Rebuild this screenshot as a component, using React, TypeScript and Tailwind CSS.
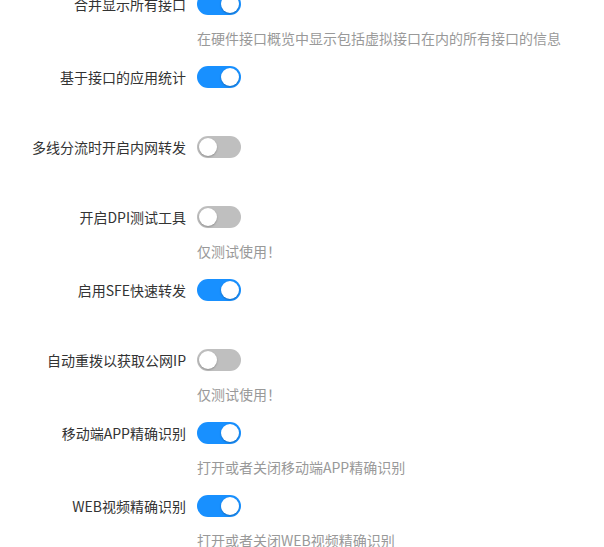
import React from "react";

type Row = { label: string; on: boolean; desc?: string };

const rows: Row[] = [
  { label: "合并显示所有接口", on: true, desc: "在硬件接口概览中显示包括虚拟接口在内的所有接口的信息" },
  { label: "基于接口的应用统计", on: true },
  { label: "多线分流时开启内网转发", on: false },
  { label: "开启DPI测试工具", on: false, desc: "仅测试使用！" },
  { label: "启用SFE快速转发", on: true },
  { label: "自动重拨以获取公网IP", on: false, desc: "仅测试使用！" },
  { label: "移动端APP精确识别", on: true, desc: "打开或者关闭移动端APP精确识别" },
  { label: "WEB视频精确识别", on: true, desc: "打开或者关闭WEB视频精确识别" },
];

function Switch({ on }: { on: boolean }) {
  return on ? (
    <div className="relative h-[22px] w-[44px] rounded-full bg-[#1890ff]">
      <div className="absolute right-[2px] top-[2px] h-[18px] w-[18px] rounded-full bg-white shadow-[0_1px_2px_rgba(0,0,0,0.25)]" />
    </div>
  ) : (
    <div className="relative h-[22px] w-[44px] rounded-full bg-[#bfbfbf]">
      <div className="absolute left-[2px] top-[2px] h-[18px] w-[18px] rounded-full bg-white shadow-[0_1px_2px_rgba(0,0,0,0.25)]" />
    </div>
  );
}

export default function App() {
  return (
    <div
      className="h-[547px] w-[604px] overflow-hidden bg-white"
      style={{ fontFamily: '"Noto Sans CJK SC", "Noto Sans", sans-serif' }}
    >
      <div className="mt-[-12px] flex flex-col">
        {rows.map((r) => (
          <div key={r.label} className={r.desc ? "h-[73px]" : "h-[70px]"}>
            <div className="flex h-[32px] items-center">
              <div className="w-[197px] pr-[11px] text-right text-[14px] leading-[32px] text-[#333333]">
                {r.label}
              </div>
              <Switch on={r.on} />
            </div>
            {r.desc && (
              <div className="mt-[8px] pl-[197px] text-[14px] leading-[20px] text-[#999999]">
                {r.desc}
              </div>
            )}
          </div>
        ))}
      </div>
    </div>
  );
}
